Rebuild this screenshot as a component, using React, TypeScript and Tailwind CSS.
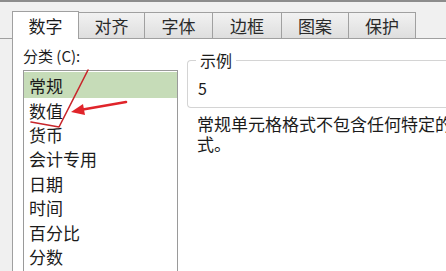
import React from 'react';

const tabs = [
  { label: '数字', w: 'w-[67px]' },
  { label: '对齐', w: 'w-[66px]' },
  { label: '字体', w: 'w-[68px]' },
  { label: '边框', w: 'w-[69px]' },
  { label: '图案', w: 'w-[67px]' },
  { label: '保护', w: 'w-[67px]' },
];

const categories = ['常规', '数值', '货币', '会计专用', '日期', '时间', '百分比', '分数'];

export default function App() {
  return (
    <div
      className="relative w-[446px] h-[271px] overflow-hidden bg-[#f0f0f0] text-[#1b1b1b]"
      style={{ fontFamily: '"Microsoft YaHei", "Noto Sans CJK SC", "Noto Sans", sans-serif' }}
    >
      {/* window edge */}
      <div className="h-[2px] bg-[#8c8c8c]" />

      {/* tab strip */}
      <div className="flex items-end h-[37px] pl-[12px] border-b border-[#a0a0a0]">
        {tabs.map((t, i) =>
          i === 0 ? (
            <div
              key={t.label}
              className={`${t.w} h-[28px] -mb-px flex items-center justify-center pt-[1px] bg-white border border-b-0 border-[#a0a0a0] text-[17px]`}
            >
              {t.label}
            </div>
          ) : (
            <div
              key={t.label}
              className={`${t.w} h-[26px] flex items-center justify-center pt-[1px] bg-gradient-to-b from-[#f2f2f2] to-[#dedede] border border-l-0 border-b-0 border-[#a0a0a0] text-[17px] text-[#2a2a2a]`}
            >
              {t.label}
            </div>
          )
        )}
      </div>

      {/* tab panel */}
      <div className="ml-[12px] h-[232px] bg-white border-l border-[#a0a0a0] flex">
        {/* category column */}
        <div className="pl-[10px] w-[174px] shrink-0">
          <div className="h-[31px] flex items-center text-[15px] leading-none pt-[1px]">
            分类 (C):
          </div>
          <div className="w-[155px] h-[220px] border border-[#9a9a9a] pt-[1px] bg-white">
            {categories.map((c, i) => (
              <div
                key={c}
                className={`h-[24.4px] flex items-center pl-[5px] text-[17px] leading-none ${
                  i === 0 ? 'bg-[#c6dcb8] h-[26px]' : ''
                }`}
              >
                {c}
              </div>
            ))}
          </div>
        </div>

        {/* sample + description */}
        <div className="flex-1 min-w-0 pt-[21px]">
          <div className="relative h-[48px] border border-[#d4d4d4] border-r-0 rounded-l-[4px]">
            <div className="absolute -top-[11px] left-[8px] bg-white px-[4px] text-[16px] leading-[20px]">
              示例
            </div>
            <div className="pt-[17px] pl-[10px] text-[16px] leading-[20px]">5</div>
          </div>
          <div className="mt-[6px] pl-[10px] text-[17px] leading-[20px] whitespace-nowrap">
            <div>常规单元格格式不包含任何特定的数字格</div>
            <div>式。</div>
          </div>
        </div>
      </div>

      {/* red hand-drawn annotation */}
      <svg className="absolute left-0 top-0 pointer-events-none" width="446" height="271">
        <path
          d="M88 70 L59 127 L31 122"
          fill="none"
          stroke="#c8262b"
          strokeWidth="1.6"
          strokeLinecap="round"
          strokeLinejoin="round"
        />
        <path d="M126 102 L80 110" stroke="#e0242a" strokeWidth="2.6" strokeLinecap="round" />
        <path d="M71 112 L83 104 L85 115 Z" fill="#e0242a" />
      </svg>
    </div>
  );
}
